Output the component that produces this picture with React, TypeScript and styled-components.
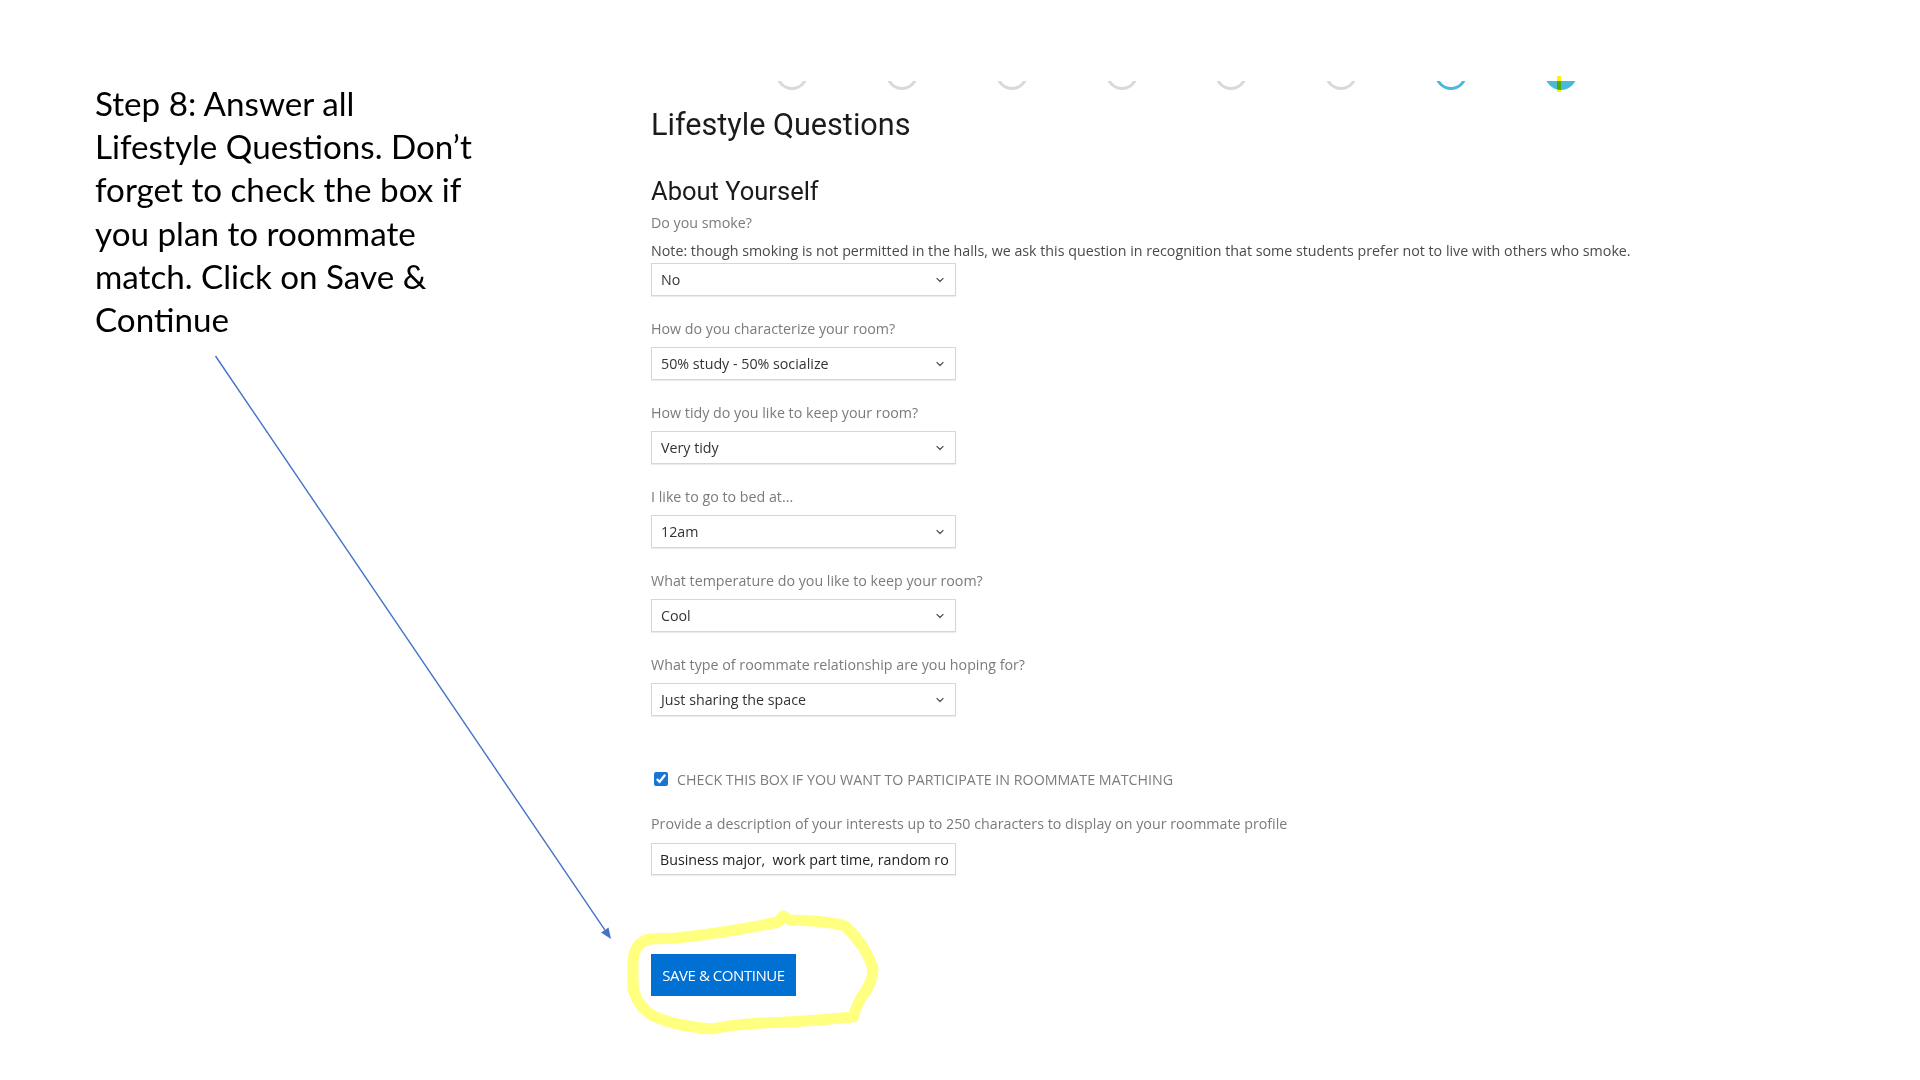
import React from "react";
import styled, { createGlobalStyle } from "styled-components";
import { ChevronDown } from "lucide-react";

const GlobalStyle = createGlobalStyle`
  html, body {
    margin: 0;
    padding: 0;
    background: #ffffff;
  }
  body {
    font-family: "Open Sans", "Liberation Sans", sans-serif;
  }
`;

const Page = styled.div`
  position: relative;
  display: flex;
  width: 1920px;
  height: 1080px;
  overflow: hidden;
  background: #ffffff;
`;

const Instructions = styled.aside`
  flex: 0 0 651px;
  box-sizing: border-box;
  padding: 82px 0 0 95px;
  font-family: Lato, "Liberation Sans", sans-serif;
  font-size: 33.2px;
  line-height: 43.2px;
  color: #000000;
  white-space: nowrap;
`;

const Form = styled.main`
  flex: 1;
  display: flex;
  flex-direction: column;
  align-items: flex-start;
  padding-top: 81px;
  font-family: "Open Sans", "Liberation Sans", sans-serif;
`;

const StepTrack = styled.div`
  display: flex;
  gap: 77.86px;
  margin-left: 125px;
  height: 10px;
`;

const Step = styled.div`
  position: relative;
  width: 32px;
  height: 10px;
`;

const StepArc = styled.div<{ $state: "todo" | "done" | "current" }>`
  box-sizing: border-box;
  width: 32px;
  height: 32px;
  margin-top: -23px;
  border-radius: 50%;
  border: 3px solid
    ${(p) => (p.$state === "todo" ? "#d9d9d9" : "#4bb9d9")};
  background: ${(p) => (p.$state === "current" ? "#4bb9d9" : "transparent")};
  clip-path: inset(23px 0 0 0);
`;

const StepMarker = styled.span`
  position: absolute;
  top: -5px;
  left: 12px;
  width: 4px;
  height: 16px;
  background: #fff200;
  mix-blend-mode: multiply;
`;

const Title = styled.h1`
  margin: 16px 0 0;
  font-family: Roboto, "Liberation Sans", sans-serif;
  font-weight: 400;
  font-size: 30.6px;
  line-height: 35px;
  color: #1b1b1b;
`;

const Subtitle = styled.h2`
  margin: 35px 0 0;
  font-family: Roboto, "Liberation Sans", sans-serif;
  font-weight: 400;
  font-size: 25.5px;
  line-height: 29px;
  color: #1b1b1b;
`;

const Field = styled.div<{ $first?: boolean }>`
  display: flex;
  flex-direction: column;
  align-items: flex-start;
  margin-top: ${(p) => (p.$first ? 7 : 23)}px;
`;

const Label = styled.label`
  font-size: 14.25px;
  line-height: 20px;
  color: #7b7b7b;
`;

const Note = styled.p`
  margin: 8px 0 0;
  font-size: 14.25px;
  line-height: 20px;
  color: #4a4a4a;
  white-space: nowrap;
`;

const SelectBox = styled.div<{ $gap: number }>`
  box-sizing: border-box;
  display: flex;
  align-items: center;
  justify-content: space-between;
  width: 305px;
  height: 33px;
  margin-top: ${(p) => p.$gap}px;
  padding: 0 9px 0 9px;
  border: 1px solid #d6d6d6;
  box-shadow: 0 1px 1px rgba(0, 0, 0, 0.07);
  background: #ffffff;
  font-size: 14.25px;
  color: #333333;

  svg {
    color: #555555;
    flex: none;
  }
`;

const CheckRow = styled.label`
  display: flex;
  align-items: center;
  gap: 9px;
  height: 20px;
  margin-top: 53px;
  padding-left: 3px;
  font-size: 14.25px;
  color: #7b7b7b;
  text-transform: uppercase;
  white-space: nowrap;

  input {
    width: 14px;
    height: 14px;
    margin: 0;
    accent-color: #1a74d4;
  }
`;

const Prompt = styled.label`
  margin-top: 25px;
  font-size: 14.25px;
  line-height: 20px;
  color: #7b7b7b;
  white-space: nowrap;
`;

const TextInput = styled.input`
  box-sizing: border-box;
  width: 305px;
  height: 32px;
  margin-top: 9px;
  padding: 0 4px 0 8px;
  border: 1px solid #d6d6d6;
  box-shadow: 0 1px 1px rgba(0, 0, 0, 0.07);
  outline: none;
  font-family: "Open Sans", "Liberation Sans", sans-serif;
  font-size: 14.25px;
  color: #222222;
  background: #ffffff;
`;

const SaveButton = styled.button`
  display: inline-flex;
  align-items: center;
  justify-content: center;
  width: 145px;
  height: 42px;
  margin-top: 79px;
  padding: 0;
  border: none;
  border-radius: 0;
  background: #0070d2;
  color: #ffffff;
  font-family: "Open Sans", "Liberation Sans", sans-serif;
  font-size: 15px;
  letter-spacing: -0.45px;
  text-transform: uppercase;
  cursor: pointer;
`;

const Overlay = styled.svg`
  position: absolute;
  top: 0;
  left: 0;
  width: 1920px;
  height: 1080px;
  pointer-events: none;
`;

const steps: Array<"todo" | "done" | "current"> = [
  "todo",
  "todo",
  "todo",
  "todo",
  "todo",
  "todo",
  "done",
  "current",
];

const questions = [
  { label: "How do you characterize your room?", value: "50% study - 50% socialize" },
  { label: "How tidy do you like to keep your room?", value: "Very tidy" },
  { label: "I like to go to bed at...", value: "12am" },
  { label: "What temperature do you like to keep your room?", value: "Cool" },
  { label: "What type of roommate relationship are you hoping for?", value: "Just sharing the space" },
];

function Select({ value, gap }: { value: string; gap: number }) {
  return (
    <SelectBox $gap={gap}>
      <span>{value}</span>
      <ChevronDown size={12} strokeWidth={2.4} />
    </SelectBox>
  );
}

export default function App() {
  return (
    <Page>
      <GlobalStyle />
      <Instructions>
        Step 8: Answer all
        <br />
        Lifestyle Questions. Don’t
        <br />
        forget to check the box if
        <br />
        you plan to roommate
        <br />
        match. Click on Save &amp;
        <br />
        Continue
      </Instructions>

      <Form>
        <StepTrack>
          {steps.map((s, i) => (
            <Step key={i}>
              <StepArc $state={s} />
              {s === "current" && <StepMarker />}
            </Step>
          ))}
        </StepTrack>

        <Title>Lifestyle Questions</Title>
        <Subtitle>About Yourself</Subtitle>

        <Field $first>
          <Label>Do you smoke?</Label>
          <Note>
            Note: though smoking is not permitted in the halls, we ask this question in recognition
            that some students prefer not to live with others who smoke.
          </Note>
          <Select value="No" gap={2} />
        </Field>

        {questions.map((q) => (
          <Field key={q.label}>
            <Label>{q.label}</Label>
            <Select value={q.value} gap={8} />
          </Field>
        ))}

        <CheckRow>
          <input type="checkbox" defaultChecked />
          Check this box if you want to participate in roommate matching
        </CheckRow>

        <Prompt>
          Provide a description of your interests up to 250 characters to display on your roommate
          profile
        </Prompt>
        <TextInput readOnly value="Business major,  work part time, random ro" />

        <SaveButton>Save &amp; Continue</SaveButton>
      </Form>

      <Overlay viewBox="0 0 1920 1080">
        <line x1="215.5" y1="356" x2="604.8" y2="929.9" stroke="#4472c4" strokeWidth="1.4" />
        <polygon points="611,939 601.1,932.4 608.5,927.4" fill="#4472c4" />
        <path
          d="M 633 990 L 633 962 Q 634 942 650 939 L 677 938 Q 730 932 778 922 L 783 916 L 790 920 Q 830 921 845 926 Q 868 948 873 970 Q 872 984 862 996 Q 856 1006 853 1017 Q 800 1022 760 1023 Q 730 1025 712 1029 Q 668 1025 650 1014 Q 634 1002 633 984"
          fill="none"
          stroke="#ffff80"
          strokeWidth="11"
          strokeLinecap="round"
          strokeLinejoin="round"
        />
      </Overlay>
    </Page>
  );
}
